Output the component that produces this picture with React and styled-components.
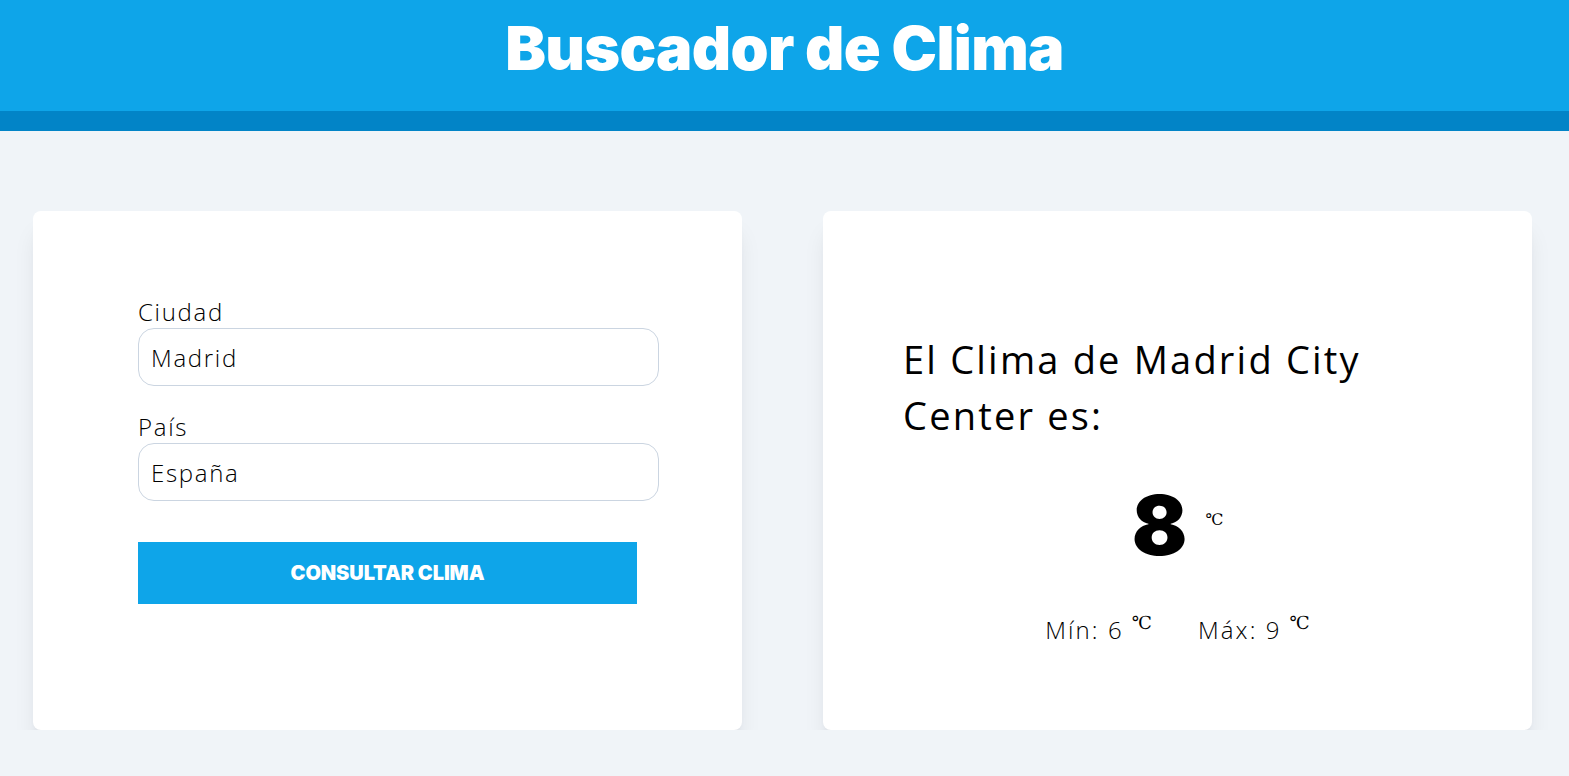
import React from "react";
import styled, { createGlobalStyle } from "styled-components";

const Global = createGlobalStyle`
  * { box-sizing: border-box; }
  body { margin: 0; background: #f0f4f8; font-family: "Open Sans", "Lato", sans-serif; }
`;

const Header = styled.header`
  background: #0ea5e9;
  border-bottom: 20px solid #0284c7;
  height: 131px;
  display: flex;
  justify-content: center;
`;

const Title = styled.h1`
  margin: 0;
  padding-top: 8px;
  font-family: "Inter", sans-serif;
  font-weight: 900;
  font-size: 61px;
  letter-spacing: -0.7px;
  line-height: 80px;
  color: #fff;
`;

const Main = styled.main`
  display: grid;
  grid-template-columns: 709px 709px;
  column-gap: 81px;
  padding: 80px 0 0 33px;
`;

const Card = styled.section`
  background: #fff;
  border-radius: 8px;
  height: 519px;
  box-shadow: 0 20px 25px -5px rgba(15, 23, 42, 0.1), 0 8px 10px -6px rgba(15, 23, 42, 0.08);
`;

const Form = styled.form`
  display: flex;
  flex-direction: column;
  padding: 84px 83px 0 105px;
`;

const Field = styled.div`
  display: flex;
  flex-direction: column;
  margin-bottom: 24px;
`;

const Label = styled.label`
  font-size: 24px;
  font-weight: 300;
  color: #000;
  line-height: 33px;
  letter-spacing: 1.7px;
`;

const Input = styled.input`
  height: 58px;
  border: 1px solid #cbd5e1;
  border-radius: 16px;
  padding: 0 12px;
  font-family: "Open Sans", sans-serif;
  font-size: 24px;
  font-weight: 300;
  letter-spacing: 1.7px;
  color: #000;
  outline: none;
`;

const Button = styled.button`
  margin-top: 17px;
  width: 499px;
  height: 62px;
  border: none;
  background: #0ea5e9;
  color: #fff;
  font-family: "Inter", sans-serif;
  font-weight: 900;
  font-size: 20px;
  letter-spacing: -0.1px;
  text-transform: uppercase;
  cursor: pointer;
`;

const Result = styled.div`
  display: flex;
  flex-direction: column;
  padding: 120px 80px 0 80px;
`;

const Heading = styled.h2`
  margin: 0;
  font-family: "Open Sans", sans-serif;
  font-weight: 500;
  font-size: 38px;
  line-height: 56px;
  letter-spacing: 2.2px;
  color: #000;
`;

const TempRow = styled.div`
  display: flex;
  justify-content: center;
  align-items: flex-start;
  margin-top: 40px;
`;

const Temp = styled.span`
  font-family: "Inter", sans-serif;
  font-weight: 900;
  font-size: 82px;
  line-height: 86px;
  color: #000;
`;

const Unit = styled.span`
  font-family: "DejaVu Serif", "Liberation Serif", serif;
  font-size: ${(p) => p.$size || 16}px;
  position: relative;
  top: ${(p) => p.$top || 0}px;
  margin-left: ${(p) => p.$gap || 4}px;
  line-height: 1;
  letter-spacing: 0;
`;

const Range = styled.div`
  display: flex;
  justify-content: center;
  gap: 46px;
  margin-top: 44px;
`;

const RangeItem = styled.p`
  margin: 0;
  font-size: 24px;
  font-weight: 300;
  letter-spacing: 2.1px;
  color: #000;
  display: flex;
  align-items: flex-start;
`;

export default function App() {
  return (
    <>
      <Global />
      <Header>
        <Title>Buscador de Clima</Title>
      </Header>
      <Main>
        <Card>
          <Form onSubmit={(e) => e.preventDefault()}>
            <Field>
              <Label htmlFor="ciudad">Ciudad</Label>
              <Input id="ciudad" defaultValue="Madrid" />
            </Field>
            <Field>
              <Label htmlFor="pais">País</Label>
              <Input id="pais" defaultValue="España" />
            </Field>
            <Button type="submit">Consultar Clima</Button>
          </Form>
        </Card>
        <Card>
          <Result>
            <Heading>El Clima de Madrid City Center es:</Heading>
            <TempRow>
              <Temp>8</Temp>
              <Unit $gap={18} $top={29}>℃</Unit>
            </TempRow>
            <Range>
              <RangeItem>
                Mín: 6 <Unit $gap={8} $top={1} $size={18}>℃</Unit>
              </RangeItem>
              <RangeItem>
                Máx: 9 <Unit $gap={8} $top={1} $size={18}>℃</Unit>
              </RangeItem>
            </Range>
          </Result>
        </Card>
      </Main>
    </>
  );
}
